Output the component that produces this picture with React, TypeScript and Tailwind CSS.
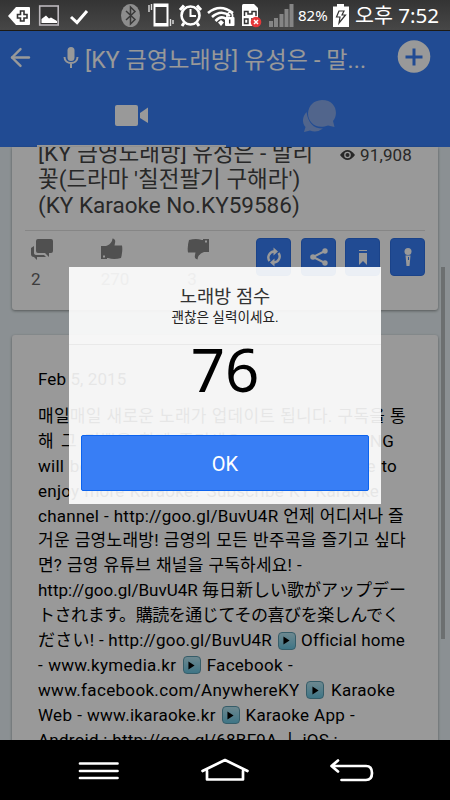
import React from "react";
import { ArrowLeft } from "lucide-react";

const lines = [
  { text: "매일매일 새로운 노래가 업데이트 됩니다. 구독을 통", style: "w-[368px] tracking-[0.25px]" },
  { text: "해 그 기쁨을 함께 즐기세요! New KPOP SONG", style: "w-[356px] tracking-[0.25px]" },
  { text: "will be updated everyday. Please subscribe to", style: "w-[359px] tracking-[0.25px]" },
  { text: "enjoy more Karaoke? Subscribe KY Karaoke", style: "w-[341px] tracking-[0.25px]" },
  { text: "channel - http://goo.gl/BuvU4R 언제 어디서나 즐", style: "w-[366px] tracking-[0.25px]" },
  { text: "거운 금영노래방! 금영의 모든 반주곡을 즐기고 싶다", style: "w-[368px] tracking-[0.25px]" },
  { text: "면? 금영 유튜브 채널을 구독하세요! -", style: "w-[264px] tracking-[0.2px]" },
  { text: "http://goo.gl/BuvU4R 毎日新しい歌がアップデー", style: "w-[368px]" },
  { text: "トされます。購読を通じてその喜びを楽しんでく", style: "w-[361px] tracking-[-0.6px]" },
  { text: "ださい! - http://goo.gl/BuvU4R ▶ Official home", style: "w-[367px] tracking-[0.2px]" },
  { text: "- www.kymedia.kr ▶ Facebook -", style: "w-[255px] tracking-[0.28px]" },
  { text: "www.facebook.com/AnywhereKY ▶ Karaoke", style: "w-[357px] tracking-[0.33px]" },
  { text: "Web - www.ikaraoke.kr ▶ Karaoke App -", style: "w-[317px] tracking-[0.28px]" },
  { text: "Android : http://goo.gl/68BF9A ㅣ iOS :", style: "w-[300px] tracking-[0.25px]" },
];

const PlayBadge = () => (
  <span className="mx-px inline-flex h-[18px] w-[18px] items-center justify-center rounded-[4px] border border-[#5a9bb0] bg-gradient-to-b from-[#b5e3ef] to-[#68c4e0] align-[1px]">
    <svg width="7" height="9" viewBox="0 0 8 10">
      <path d="M0.5 0.5L7.5 5L0.5 9.5Z" fill="#000" />
    </svg>
  </span>
);

const StatusBar = () => (
  <div className="flex h-[31px] w-full shrink-0 items-center border-b border-[#1d1a14] bg-gradient-to-b from-[#343434] to-[#474747] font-['Noto_Sans','Noto_Sans_CJK_KR',sans-serif] text-white">
    <svg width="272" height="30" viewBox="0 0 272 30" className="shrink-0">
      <path d="M8 16L16 7H29Q30 7 30 8V24Q30 25 29 25H16Z" fill="#fff" />
      <path d="M20.5 11H24V14.5H27V18H24V21H20.5V18H17.5V14.5H20.5Z" fill="#fff" stroke="#333" strokeWidth="1.6" />
      <rect x="39.7" y="6" width="18.5" height="19" fill="#333" stroke="#bbb7bc" strokeWidth="1.6" />
      <path d="M41.5 23V19L46 15.5L49 18.5L51 17.5L57 21V23Z" fill="#fff" />
      <path d="M71 17L77 22.5L87 11" fill="none" stroke="#fff" strokeWidth="3" />
      <ellipse cx="130.5" cy="15.5" rx="9.5" ry="11.5" fill="#8d8d8d" />
      <path d="M126 11L135 19.5L130.5 24V7L135 11.5L126 20" fill="none" stroke="#393939" strokeWidth="1.5" />
      <rect x="154.5" y="4.5" width="13" height="21" fill="#3a3a3a" stroke="#fff" strokeWidth="2" />
      <path d="M154 5.5H168M154 24.5H168" stroke="#fff" strokeWidth="3" />
      <path d="M149 5V12M151.5 4V10M170.5 19V26M173 20V24" stroke="#ddd" strokeWidth="1.4" />
      <circle cx="190.5" cy="15.5" r="9" fill="none" stroke="#fff" strokeWidth="2.6" />
      <path d="M190.5 9V16H196" fill="none" stroke="#fff" strokeWidth="2" />
      <path d="M180 10L184 5.5M197 5.5L201 10M184 23L182 26M197 23L199 26" stroke="#fff" strokeWidth="3" />
      <path d="M208 13Q220 3 233 13M212 17Q221 9 230 16M215.5 21Q221 15 226 19" fill="none" stroke="#fff" strokeWidth="2.6" />
      <path d="M218 22.5L221 20L224 22.5L221 26Z" fill="#fff" />
      <rect x="225" y="17" width="9.5" height="9" rx="1" fill="#fff" />
      <path d="M227 18V14.5Q230 10 232.5 14.5V18" fill="none" stroke="#fff" strokeWidth="1.7" />
      <path d="M229.7 19.5V23.5" stroke="#333" strokeWidth="1.5" />
      <path d="M242 5.5Q242 4 243.5 4H254L258 8V26H242Z" fill="#fff" />
      <path d="M244.5 16V11.5H248V14H252V11.5H256V16M244.5 19H248V23.5H244.5ZM251 19H255" fill="none" stroke="#333" strokeWidth="1.5" />
      <circle cx="256" cy="22" r="5.3" fill="#e6383a" />
      <path d="M254 20L258 24M258 20L254 24" stroke="#fff" strokeWidth="1.5" />
    </svg>
    <svg width="25" height="24" viewBox="0 0 25 24" className="-ml-[3px] shrink-0">
      <path d="M0 18H4V24H0ZM5 15H9V24H5ZM10.5 11H14.5V24H10.5ZM15.5 6H19.5V24H15.5ZM20.5 1H24.5V24H20.5Z" fill="#858585" />
    </svg>
    <span className="ml-[4px] w-[31px] pt-px text-[15px] whitespace-nowrap">82%</span>
    <svg width="16" height="25" viewBox="0 0 16 25" className="ml-[4px] shrink-0">
      <path d="M0 3.5H4V1H11V3.5H16V24H0Z" fill="#fff" />
      <path d="M6 8L3.5 14H7L6 20L12.5 12H9L11 8Z" fill="#fff" stroke="#333" strokeWidth="1.2" />
    </svg>
    <span className="ml-[6px] pt-px text-[20.6px] leading-none whitespace-nowrap">오후 7:52</span>
  </div>
);

const Header = () => (
  <header className="h-[116px] w-full shrink-0 bg-[#387ef5] text-white">
    <div className="flex h-[52px] items-center">
      <ArrowLeft size={29} strokeWidth={2} className="ml-[6px] shrink-0" />
      <svg width="16" height="24" viewBox="0 -2 16 24" className="ml-[28px] shrink-0">
        <rect x="4.5" y="0" width="7" height="14" rx="3.5" fill="#fff" />
        <path d="M1.5 10C1.5 18 14.5 18 14.5 10M8 16V21" fill="none" stroke="#fff" strokeWidth="2" />
      </svg>
      <h1 className="ml-[6px] w-[290px] shrink-0 pt-[8px] text-[23px] tracking-[0.14px] whitespace-nowrap">[KY 금영노래방] 유성은 - 말...</h1>
      <svg width="34" height="34" viewBox="0 0 34 34" className="ml-[22px] shrink-0">
        <circle cx="17" cy="16.5" r="16.3" fill="#fff" />
        <path d="M17 8.5V25.5M8.5 17H25.5" stroke="#387ef5" strokeWidth="3" />
      </svg>
    </div>
    <div className="flex h-[62px] items-center pt-[4px]">
      <svg width="34" height="22" viewBox="0 0 34 22" className="ml-[115px]">
        <rect x="0" y="0" width="23" height="21" rx="2" fill="#fff" />
        <path d="M25 8L33 2.5V18L25 13Z" fill="#fff" />
      </svg>
      <svg width="34" height="34" viewBox="0 0 34 34" className="ml-[153px]" fill="#87a9e9">
        <path d="M4.5 13C0 18 0 24 3.5 28L2 33L8 31.5Q15 34 21 29.5Q7 30 4.5 13Z" />
        <path d="M20 1C34 1 37 15 31 22L32.5 28L26 26.5C14 31 6 23 6 14.5Q7 2 20 1Z" />
      </svg>
    </div>
    <div className="ml-[37px] h-[2px] w-[189px] bg-white" />
  </header>
);

const Thumb = ({ className }: { className?: string }) => (
  <svg width="22" height="22" viewBox="0 0 22 22" className={className} fill="#858585">
    <path d="M0 8H5Q9 7 11 3L11.5 0.5Q15 1 14 5L13.5 7.5H21Q22 13 20 20Q13 22 7 20H6V21H0ZM2 17.5V19.5H4V17.5Z" fillRule="evenodd" />
  </svg>
);

const actions = [
  { id: "refresh", gap: "" },
  { id: "share", gap: "ml-[10px]" },
  { id: "bookmark", gap: "ml-[9px]" },
  { id: "mic", gap: "ml-[10px]" },
];

const ActionIcon = ({ id }: { id: string }) => (
  <svg width="18" height="20" viewBox="0 0 18 20" fill="none" stroke="#fff" strokeWidth="2.4">
    {id === "refresh" && (
      <>
        <path d="M4.5 14A6 6 0 0 1 9 4.5M13.5 6A6 6 0 0 1 9 15.5" />
        <path d="M8.5 0.5L13 4.5L8.5 8.5ZM9.5 11.5L5 15.5L9.5 19.5Z" fill="#fff" stroke="none" />
      </>
    )}
    {id === "share" && (
      <>
        <path d="M15 4L3 10L15 16" strokeWidth="2" />
        <g fill="#fff" stroke="none">
          <circle cx="15" cy="4" r="2.7" />
          <circle cx="3" cy="10" r="2.8" />
          <circle cx="15" cy="16" r="2.7" />
        </g>
      </>
    )}
    {id === "bookmark" && <path d="M5 3H13V4H5ZM5 6H13V18L9 14L5 18Z" fill="#fff" stroke="none" />}
    {id === "mic" && (
      <>
        <circle cx="9" cy="4.5" r="3.5" fill="#fff" stroke="none" />
        <path d="M6.5 8.5H11.5L10.5 19H7.5Z" fill="#fff" stroke="none" />
        <path d="M9.5 10V13" stroke="#387ef5" strokeWidth="1" />
      </>
    )}
  </svg>
);

const VideoCard = () => (
  <section className="h-[163px] w-[426px] shrink-0 overflow-hidden rounded-b-[3px] bg-white pl-[26px] shadow-[0_1px_3px_rgba(0,0,0,0.4)]">
    <div className="flex h-[83px]">
      <h2 className="-mt-[7px] w-[302px] text-[22.5px] leading-[26px] whitespace-nowrap text-[#444]">
        [KY 금영노래방] 유성은 - 말리
        <br />
        꽃(드라마 '칠전팔기 구해라')
        <br />
        (KY Karaoke No.KY59586)
      </h2>
      <svg width="15" height="10" viewBox="0 0 15 10" className="mt-[3px] shrink-0">
        <path d="M0 5Q7.5 -5 15 5Q7.5 15 0 5Z" fill="#444" />
        <circle cx="7.5" cy="5" r="3.3" fill="#fff" />
        <circle cx="7.5" cy="5" r="2" fill="#444" />
      </svg>
      <span className="-mt-[4px] ml-[5px] text-[17px] tracking-[0.15px] text-[#444]">91,908</span>
    </div>
    <div className="-ml-[13px] flex w-[400px] border-t border-[#e0e0e0] pt-[7px] text-[17px] leading-[24px] text-[#666]">
      <div className="w-[70px] pl-[6px]">
        <svg width="23" height="22" viewBox="0 0 23 22" fill="#858585">
          <path d="M7 1H20Q22 1 22 3V13Q22 15 20 15H18V19L14 15H7Q5 15 5 13V3Q5 1 7 1Z" />
          <path d="M3 8V15Q3 17 6 17H13L15 19H6V22L3 19Q0 19 0 16V10Z" />
        </svg>
        <div className="mt-[7px]">2</div>
      </div>
      <div className="w-[87px] pl-[6px]">
        <Thumb />
        <div className="mt-[7px]">270</div>
      </div>
      <div className="w-[75px] pl-[6px]">
        <Thumb className="rotate-180" />
        <div className="mt-[7px]">3</div>
      </div>
      <div className="flex">
        {actions.map((a) => (
          <div key={a.id} className={`${a.gap} flex h-[38px] w-[35px] items-center justify-center rounded-[4px] border border-[#2d71e5] bg-[#387ef5]`}>
            <ActionIcon id={a.id} />
          </div>
        ))}
      </div>
    </div>
  </section>
);

const Description = () => (
  <section className="mt-[25px] h-[420px] w-[426px] shrink-0 rounded-t-[3px] bg-white pt-[32px] pl-[26px] text-[17px] text-black shadow-[0_1px_3px_rgba(0,0,0,0.4)]">
    <p className="h-[37px] leading-[25px] tracking-[0.1px]">Feb 5, 2015</p>
    {lines.map((line) => (
      <p key={line.text} className={`h-[24.9px] leading-[24.9px] whitespace-nowrap [text-align-last:justify] ${line.style}`}>
        {line.text.split("▶").map((part, i) => (
          <React.Fragment key={i}>
            {i > 0 && <PlayBadge />}
            {part}
          </React.Fragment>
        ))}
      </p>
    ))}
  </section>
);

const ScorePopup = () => (
  <div className="absolute top-[236px] left-[69px] flex h-[237px] w-[312px] flex-col bg-white/90 text-center">
    <div className="h-[78px] shrink-0 border-b border-black/5 bg-white/10 pt-[19px]">
      <h3 className="text-[18.7px] leading-[23px] text-[#333]">노래방 점수</h3>
      <p className="text-[13.6px] leading-[16px] text-[#222]">괜찮은 실력이세요.</p>
    </div>
    <div className="h-[90px] shrink-0 font-['Noto_Sans','Open_Sans',sans-serif] text-[60px] leading-[48px] text-black">76</div>
    <button className="mx-[12px] h-[56px] shrink-0 rounded-[2px] border border-[#0c63ee] bg-[#387ef5] pt-[2px] text-[20px] text-white">OK</button>
  </div>
);

const NavBar = () => (
  <div className="flex h-[60px] shrink-0 items-center bg-black">
    <svg width="450" height="60" viewBox="0 0 450 60" fill="none" stroke="#fff" strokeWidth="2.7" strokeLinecap="round">
      <path d="M80 23.5H117.5M80 31H117.5M80 38H117.5" />
      <path d="M202.5 31L225 20L247.5 31M207 31V39.5H243V31" strokeLinejoin="round" />
      <path d="M338 20.5L331.5 26L338 31.5M332 26H366Q372 26 372 33Q372 40 366 40H341.5" strokeLinejoin="round" />
    </svg>
  </div>
);

export default function App() {
  return (
    <div className="flex h-[800px] w-[450px] flex-col overflow-hidden bg-black font-[Roboto,'Noto_Sans_CJK_KR',sans-serif]">
      <StatusBar />
      <main className="relative h-[709px] shrink-0 overflow-hidden">
        <div className="flex h-full flex-col bg-[#e8f1f5]">
          <Header />
          <div className="flex flex-col pl-[12px]">
            <VideoCard />
            <Description />
          </div>
        </div>
        <div className="absolute top-[236px] left-[441px] h-[372px] w-[4px] bg-[#b5b9bb]" />
        <div className="absolute inset-0 bg-black/40" />
        <ScorePopup />
      </main>
      <NavBar />
    </div>
  );
}
